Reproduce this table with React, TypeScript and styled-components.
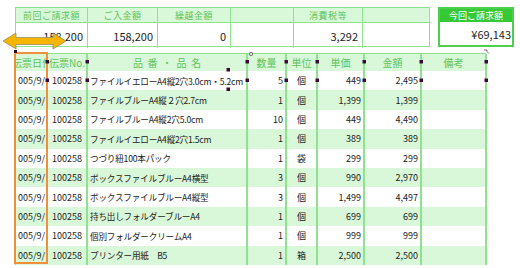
import * as React from 'react';
import styled, { createGlobalStyle } from 'styled-components';

const GlobalStyle = createGlobalStyle`
  html, body { margin: 0; padding: 0; background: #ffffff; }
  body { font-family: "Noto Sans CJK JP", "Noto Sans", sans-serif; }
`;

const LINE = '#8fe38f';
const PALE = '#d9f7d9';
const TEXT = '#222222';

const Page = styled.div`
  position: relative;
  width: 520px;
  height: 268px;
  overflow: hidden;
  padding: 7px 0 0 15px;
  box-sizing: border-box;
`;

const Summary = styled.div`
  display: flex;
  gap: 8px;
  height: 40px;
`;

const SumTable = styled.div`
  display: grid;
  grid-template-columns: 72px 70px 73px 63px 69px 66px;
  grid-template-rows: 15px 25px;
  border: 1.5px solid ${LINE};
  box-sizing: border-box;
`;

const SumHead = styled.div<{ $last?: boolean }>`
  background: ${PALE};
  color: #5cc45c;
  font-size: 9px;
  letter-spacing: 0.5px;
  display: flex;
  align-items: center;
  justify-content: center;
  border-right: ${(p) => (p.$last ? 'none' : `1.5px solid ${LINE}`)};
  border-bottom: 1.5px solid ${LINE};
`;

const SumValue = styled.div<{ $last?: boolean }>`
  color: ${TEXT};
  font-size: 11px;
  display: flex;
  align-items: center;
  justify-content: flex-end;
  padding-right: 4px;
  border-right: ${(p) => (p.$last ? 'none' : `1.5px solid ${LINE}`)};
`;

const TotalBox = styled.div`
  width: 76px;
  border: 2px solid #4ccf4c;
  box-sizing: border-box;
  display: grid;
  grid-template-rows: 13px 1fr;
`;

const TotalHead = styled.div`
  background: #36c936;
  color: #ffffff;
  font-size: 9px;
  display: flex;
  align-items: center;
  justify-content: center;
`;

const TotalValue = styled.div`
  font-size: 11px;
  color: ${TEXT};
  display: flex;
  align-items: center;
  justify-content: flex-end;
  padding-right: 1px;
`;

const Grid = styled.div`
  margin-top: 6px;
  width: 471px;
  display: grid;
  grid-template-columns: 32px 40px 160px 39px 31px 47px 57px 65px;
  grid-auto-rows: 19.4px;
  grid-template-rows: 17px;
  border-top: 1.5px solid ${LINE};
  border-left: 1.5px solid ${LINE};
  box-sizing: border-box;
`;

const Cell = styled.div<{ $align?: 'left' | 'right' | 'center'; $line?: boolean; $alt?: boolean; $tight?: boolean }>`
  display: flex;
  align-items: center;
  justify-content: ${(p) =>
    p.$align === 'right' ? 'flex-end' : p.$align === 'center' ? 'center' : 'flex-start'};
  padding: 0 2px;
  overflow: hidden;
  white-space: nowrap;
  font-size: ${(p) => (p.$tight ? '8.6px' : '9px')};
  letter-spacing: ${(p) => (p.$tight ? '-0.2px' : '0')};
  color: ${TEXT};
  background: ${(p) => (p.$alt ? PALE : '#ffffff')};
  border-right: ${(p) => (p.$line ? `2px solid ${LINE}` : 'none')};
  box-sizing: border-box;
`;

const HeadCell = styled(Cell)`
  background: ${PALE};
  color: #5cc45c;
  font-size: 10px;
  padding: 0;
`;

const Overlay = styled.svg`
  position: absolute;
  left: 0;
  top: 0;
  pointer-events: none;
`;

type Row = [string, string, string, string, string, string];

const rows: Row[] = [
  ['ファイルイエローA4縦2穴3.0cm・5.2cm', '5', '個', '449', '2,495', ''],
  ['ファイルブルーA4縦２穴2.7cm', '1', '個', '1,399', '1,399', ''],
  ['ファイルブルーA4縦2穴5.0cm', '10', '個', '449', '4,490', ''],
  ['ファイルイエローA4縦2穴1.5cm', '1', '個', '389', '389', ''],
  ['つづり紐100本パック', '1', '袋', '299', '299', ''],
  ['ボックスファイルブルーA4横型', '3', '個', '990', '2,970', ''],
  ['ボックスファイルブルーA4縦型', '3', '個', '1,499', '4,497', ''],
  ['持ち出しフォルダーブルーA4', '1', '個', '699', '699', ''],
  ['個別フォルダークリームA4', '1', '個', '999', '999', ''],
  ['プリンター用紙　B5', '1', '箱', '2,500', '2,500', ''],
];

const summary = [
  ['前回ご請求額', '158,200'],
  ['ご入金額', '158,200'],
  ['繰越金額', '0'],
  ['', ''],
  ['消費税等', '3,292'],
  ['', ''],
];

const handleXs = [47, 87, 247, 286, 317, 364, 421, 486];

const Handles: React.FC = () => (
  <Overlay width={520} height={268}>
    {/* orange selection around the date column */}
    <rect x={15} y={53} width={32} height={210} fill="none" stroke="#f0913a" strokeWidth={2} />
    {/* resize arrow */}
    <path
      d="M3 41 L16 33 L16 37.5 L53 37.5 L53 33 L66 41 L53 49 L53 44.5 L16 44.5 L16 49 Z"
      fill="#f6b500"
      stroke="#9a8a60"
      strokeWidth={0.8}
    />
    <rect x={14} y={50} width={3} height={3} fill="#2b0b2b" />
    {handleXs.map((x) => (
      <React.Fragment key={x}>
        <rect x={x - 1.5} y={60} width={3.5} height={3.5} fill="#3a0a3a" />
        <rect x={x - 1.5} y={78.5} width={3.5} height={3.5} fill="#3a0a3a" />
      </React.Fragment>
    ))}
    <rect x={226.5} y={68} width={3.5} height={3.5} fill="#3a0a3a" />
    <rect x={226.5} y={87.5} width={3.5} height={3.5} fill="#3a0a3a" />
    <circle cx={251} cy={54} r={1.6} fill="#ffffff" stroke="#333333" strokeWidth={0.7} />
    <path d="M484 50 L487 50 L487 51.5 L489 53.5" fill="none" stroke="#555555" strokeWidth={0.8} />
  </Overlay>
);

const App: React.FC = () => {
  return (
    <>
      <GlobalStyle />
      <Page>
        <Summary>
          <SumTable>
            {summary.map(([h], i) => (
              <SumHead key={'h' + i} $last={i === summary.length - 1}>
                {h}
              </SumHead>
            ))}
            {summary.map(([, v], i) => (
              <SumValue key={'v' + i} $last={i === summary.length - 1}>
                {v}
              </SumValue>
            ))}
          </SumTable>
          <TotalBox>
            <TotalHead>今回ご請求額</TotalHead>
            <TotalValue>¥69,143</TotalValue>
          </TotalBox>
        </Summary>

        <Grid>
          <HeadCell $align="center">伝票日付</HeadCell>
          <HeadCell $align="center" $line>
            伝票No.
          </HeadCell>
          <HeadCell $align="center" $line>
            品&nbsp;&nbsp;番&nbsp;&nbsp;・&nbsp;&nbsp;品&nbsp;&nbsp;名
          </HeadCell>
          <HeadCell $align="center" $line>
            数量
          </HeadCell>
          <HeadCell $align="center" $line>
            単位
          </HeadCell>
          <HeadCell $align="center" $line>
            単価
          </HeadCell>
          <HeadCell $align="center" $line>
            金額
          </HeadCell>
          <HeadCell $align="center" $line>
            備考
          </HeadCell>

          {rows.map((r, i) => {
            const alt = i % 2 === 1;
            return (
              <React.Fragment key={i}>
                <Cell $alt={alt}>005/9/</Cell>
                <Cell $alt={alt} $align="center" $line>
                  100258
                </Cell>
                <Cell $alt={alt} $line $tight>
                  {r[0]}
                </Cell>
                <Cell $alt={alt} $align="right" $line>
                  {r[1]}
                </Cell>
                <Cell $alt={alt} $align="center" $line>
                  {r[2]}
                </Cell>
                <Cell $alt={alt} $align="right" $line>
                  {r[3]}
                </Cell>
                <Cell $alt={alt} $align="right" $line>
                  {r[4]}
                </Cell>
                <Cell $alt={alt} $line>
                  {r[5]}
                </Cell>
              </React.Fragment>
            );
          })}
        </Grid>
        <Handles />
      </Page>
    </>
  );
};

export default App;
